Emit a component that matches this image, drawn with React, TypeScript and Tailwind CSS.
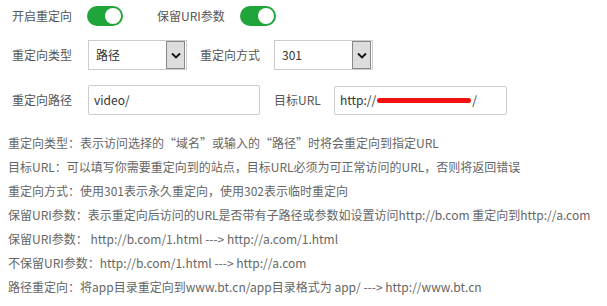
import React from "react";

const Toggle = () => (
  <div className="flex h-[20px] w-[36px] items-center justify-end rounded-full bg-[#20a53a] pr-[2px]">
    <div className="h-[16px] w-[16px] rounded-full bg-white" />
  </div>
);

const Select = ({ value }: { value: string }) => (
  <div className="flex h-[30px] w-[99px] items-center border border-[#ccc] bg-white">
    <span className="flex-1 pl-[7px] text-[12px] text-[#333]">{value}</span>
    <div className="mr-px flex h-[28px] w-[19px] items-center justify-center border border-[#888] bg-[#ddd]">
      <svg width="10" height="7" viewBox="0 0 10 7" fill="none">
        <path d="M1 1.5 L5 5.5 L9 1.5" stroke="#111" strokeWidth="1.8" />
      </svg>
    </div>
  </div>
);

const help = [
  "重定向类型：表示访问选择的“域名”或输入的“路径”时将会重定向到指定URL",
  "目标URL：可以填写你需要重定向到的站点，目标URL必须为可正常访问的URL，否则将返回错误",
  "重定向方式：使用301表示永久重定向，使用302表示临时重定向",
  "保留URI参数：表示重定向后访问的URL是否带有子路径或参数如设置访问http://b.com 重定向到http://a.com",
  "保留URI参数： http://b.com/1.html ---> http://a.com/1.html",
  "不保留URI参数：http://b.com/1.html ---> http://a.com",
  "路径重定向：将app目录重定向到www.bt.cn/app目录格式为 app/ ---> http://www.bt.cn",
];

export default function App() {
  return (
    <div
      className="h-[306px] w-[607px] overflow-hidden bg-white pt-[6px] text-[12px] text-[#555]"
      style={{ fontFamily: '"Noto Sans CJK SC", "Noto Sans", sans-serif' }}
    >
      <div className="pl-[12px]">
        <div className="flex h-[20px] items-center">
          <span className="w-[75px]">开启重定向</span>
          <Toggle />
          <span className="ml-[34px] w-[83px]">保留URI参数</span>
          <Toggle />
        </div>

        <div className="mt-[14px] flex h-[30px] items-center">
          <span className="w-[76px]">重定向类型</span>
          <Select value="路径" />
          <span className="ml-[13px] w-[74px]">重定向方式</span>
          <Select value="301" />
        </div>

        <div className="mt-[15px] flex h-[30px] items-center">
          <span className="w-[76px]">重定向路径</span>
          <div className="flex h-[30px] w-[172px] items-center rounded-[2px] border border-[#ccc] pl-[5px] text-[#333]">
            video/
          </div>
          <span className="ml-[14px] w-[60px]">目标URL</span>
          <div className="flex h-[29px] w-[173px] items-center rounded-[2px] border border-[#ccc] pl-[5px] text-[#333]">
            http://
            <span className="mx-px inline-block h-[5px] w-[94px] rounded-full bg-[#f01010]" />
            /
          </div>
        </div>
      </div>

      <div className="mt-[16px] pl-[8px] leading-[24px] text-[#666]">
        {help.map((line, i) => (
          <div key={i} className="whitespace-nowrap">
            {line}
          </div>
        ))}
      </div>
    </div>
  );
}
